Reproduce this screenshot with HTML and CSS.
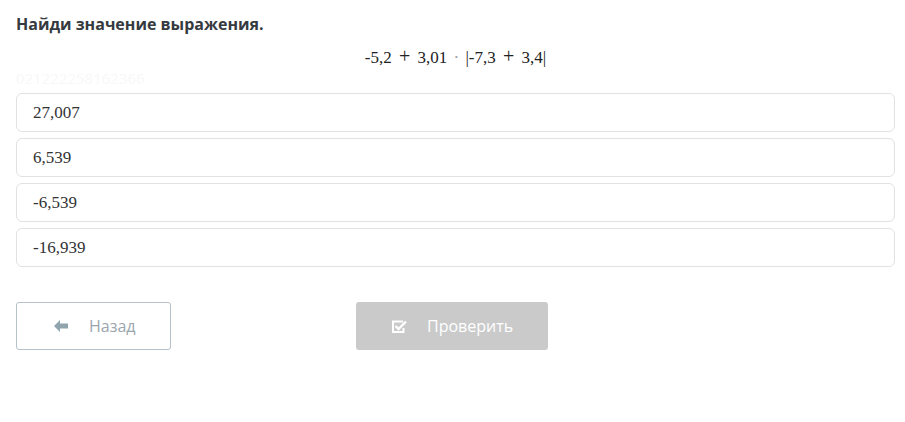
FILE: index.html
```html
<!DOCTYPE html>
<html lang="ru">
<head>
  <meta charset="UTF-8">
  <title>Найди значение выражения</title>
  <link rel="stylesheet" href="styles.css">
</head>
<body>

<div class="task">
  <h1 class="task-title">Найди значение выражения.</h1>
  <div class="formula">-5,2 <span class="op">+</span> 3,01 <span class="dot">·</span> |-7,3 <span class="op">+</span> 3,4|</div>
  <div class="task-id">021222258162366</div>

  <div class="options">
    <div class="option">27,007</div>
    <div class="option">6,539</div>
    <div class="option">-6,539</div>
    <div class="option">-16,939</div>
  </div>

  <div class="actions">
    <button class="btn btn-back">
      <svg width="16" height="14" viewBox="0 0 16 14"><path d="M7 1 L1 7 L7 13 L7 9.5 L15 9.5 L15 4.5 L7 4.5 Z" fill="#90a4ae"/></svg>
      <span>Назад</span>
    </button>
    <button class="btn btn-check">
      <svg width="17" height="15" viewBox="0 0 17 15"><path d="M12 2.5 H2 V13 H12.5 V9" fill="none" stroke="#fff" stroke-width="2"/><path d="M4.5 7 L7.5 10 L15 2.5" fill="none" stroke="#fff" stroke-width="2.4"/></svg>
      <span>Проверить</span>
    </button>
  </div>
</div>

</body>
</html>
```

FILE: styles.css
```css
body {
  margin: 0;
  background: #fff;
  font-family: "Open Sans", Arial, sans-serif;
  color: #333;
}

.task {
  padding: 14px 10px 0 16px;
}

.task-title {
  margin: 0;
  font-size: 16px;
  font-weight: 700;
  line-height: 20px;
  color: #353a40;
}

.formula {
  height: 22px;
  text-align: center;
  font-family: "Liberation Serif", "Times New Roman", serif;
  font-size: 17px;
  line-height: 22px;
  margin-top: 12px;
  color: #222;
}

.formula .op {
  font-size: 20px;
  line-height: 20px;
  margin: 0 3px;
}

.formula .dot {
  color: #999;
  margin: 0 2px;
}

.task-id {
  font-size: 15px;
  line-height: 18px;
  color: #f8f8f8;
  margin-top: 1px;
}

.options {
  display: flex;
  flex-direction: column;
  gap: 6px;
  margin-top: 6px;
}

.option {
  height: 37px;
  border: 1px solid #e2e2e2;
  border-radius: 6px;
  padding: 0 16px;
  display: flex;
  align-items: center;
  font-family: "Liberation Serif", "Times New Roman", serif;
  font-size: 17px;
  color: #333;
}

.actions {
  display: flex;
  gap: 185px;
  margin-top: 35px;
}

.btn {
  height: 48px;
  border-radius: 3px;
  display: flex;
  align-items: center;
  font-family: "Open Sans", Arial, sans-serif;
  font-size: 16px;
  cursor: pointer;
}

.btn-back {
  width: 155px;
  background: #fff;
  border: 1px solid #b6c2c9;
  color: #9aa6ae;
  padding: 0 0 0 36px;
  gap: 20px;
}

.btn-check {
  width: 192px;
  background: #cacaca;
  border: none;
  color: #fff;
  padding: 0 0 0 35px;
  gap: 19px;
}
```
